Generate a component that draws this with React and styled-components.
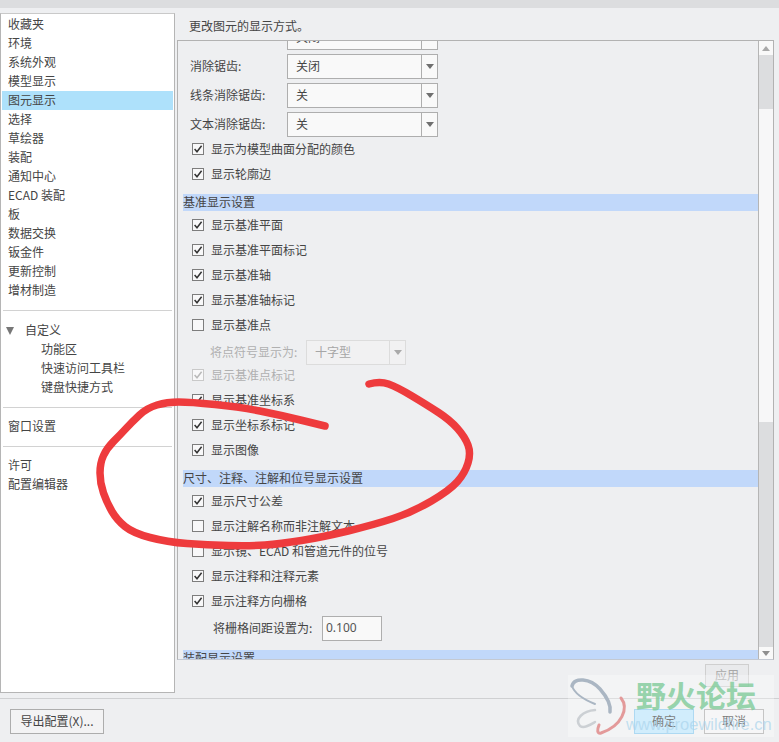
import React from 'react'
import styled, { createGlobalStyle } from 'styled-components'

const Global = createGlobalStyle`
html, body { margin:0; padding:0; background:#eeeff1; }
body { font-family:"Noto Sans CJK SC","Noto Sans",sans-serif; font-size:12px; color:#454545; }
`
const Page = styled.div`
position:relative;
width:779px;
height:742px;
overflow:hidden;
display:flex;
flex-direction:column;
background:#eeeff1;
`
const TopStrip = styled.div`
height:8px;
background:#dcdddf;
`
const Body = styled.div`
height:690px;
box-sizing:border-box;
padding-top:5px;
display:flex;
gap:2px;
`
const Sidebar = styled.div`
width:175px;
height:680px;
box-sizing:border-box;
padding:1px 1px 0;
background:#fff;
border:1px solid #b5b5b5;
border-top-color:#c9c9c9;
`
const NavItem = styled.div`
height:19px;
line-height:18px;
padding-left:${p => p.$indent || 6}px;
background:${p => p.$active ? '#aee1fb' : 'transparent'};
white-space:nowrap;
`
const NavDivider = styled.div`
height:1px;
margin:10px 1px 9px;
background:#d2d2d2;
`
const NavTree = styled.div`
padding-top:1px;
`
const TreeHead = styled.div`
position:relative;
height:19px;
line-height:18px;
padding-left:23px;
`
const TreeArrow = styled.span`
position:absolute;
left:4px;
top:6px;
border-style:solid;
border-width:8px 4.5px 0;
border-color:#777 transparent transparent;
`
const Main = styled.div`
flex:1;
display:flex;
flex-direction:column;
`
const Caption = styled.div`
height:27px;
line-height:26px;
padding-left:12px;
`
const Panel = styled.div`
width:597px;
height:620px;
box-sizing:border-box;
display:flex;
border:1px solid #b2b2b2;
border-bottom-color:#c4c9d2;
`
const Content = styled.div`
flex:1;
min-width:0;
overflow:hidden;
padding-left:5px;
display:flex;
flex-direction:column;
& > * { flex:none; }
`
const SelectStack = styled.div`
display:flex;
flex-direction:column;
gap:4px;
margin:-16px 0 2px;
`
const FieldRow = styled.div`
display:flex;
align-items:center;
height:25px;
padding-left:${p => p.$indent}px;
color:${p => p.$disabled ? '#b0b0b0' : 'inherit'};
margin-bottom:${p => p.$after || 0}px;
`
const FieldLabel = styled.div`
width:${p => p.$width}px;
min-height:1px;
margin-bottom:2px;
white-space:nowrap;
`
const Select = styled.div`
width:${p => p.$width}px;
height:25px;
box-sizing:border-box;
display:flex;
background:${p => p.$disabled ? '#f1f1f2' : '#f9f9f9'};
border:1px solid ${p => p.$disabled ? '#dcdcdc' : '#aeaeae'};
color:${p => p.$disabled ? '#a6a6a6' : '#454545'};
`
const SelectValue = styled.div`
flex:1;
line-height:21px;
padding-left:8px;
`
const SelectButton = styled.div`
width:15px;
display:flex;
align-items:center;
justify-content:center;
border-left:1px solid ${p => p.$disabled ? '#dcdcdc' : '#aeaeae'};
`
const Triangle = styled.span`
border-style:solid;
border-width:${p => p.$up ? '0 4px 5px' : '5px 4px 0'};
border-color:${p => p.$up ? `transparent transparent ${p.$color}` : `${p.$color} transparent transparent`};
`
const CheckRow = styled.div`
display:flex;
align-items:center;
height:20px;
margin-bottom:5px;
padding-left:9px;
color:${p => p.$disabled ? '#b0b0b0' : 'inherit'};
white-space:nowrap;
`
const CheckText = styled.span`
margin-bottom:2px;
`
const Box = styled.span`
width:12px;
height:12px;
box-sizing:border-box;
margin-right:7px;
display:flex;
background:#f8f8f9;
border:1px solid ${p => p.$disabled ? '#c9c9c9' : '#7d7d7d'};
`
const SectionBar = styled.div`
height:17px;
line-height:16px;
margin:5px 0 4px;
background:#c1d8fa;
white-space:nowrap;
`
const NumberField = styled.div`
width:60px;
height:25px;
box-sizing:border-box;
line-height:22px;
padding-left:3px;
background:#f9f9f9;
border:1px solid #aeaeae;
color:#555;
font-family:"Noto Sans",sans-serif;
`
const Scrollbar = styled.div`
width:15px;
box-sizing:border-box;
display:flex;
flex-direction:column;
border-left:1px solid #b5b5b5;
`
const ScrollButton = styled.div`
height:${p => p.$h}px;
display:flex;
align-items:center;
justify-content:center;
background:#f9f9f9;
`
const ScrollTrack = styled.div`
height:${p => p.$h}px;
flex:${p => p.$h ? 'none' : 1};
background:#dcdddf;
`
const ScrollThumb = styled.div`
height:313px;
background:#f7f7f8;
`
const ApplyRow = styled.div`
display:flex;
justify-content:flex-end;
padding:4px 30px 0 0;
`
const Button = styled.div`
width:${p => p.$width}px;
height:${p => p.$height || 25}px;
box-sizing:border-box;
line-height:${p => (p.$height || 25) - 3}px;
text-align:center;
white-space:nowrap;
background:${p => p.$primary ? '#bde5fb' : p.$disabled ? '#e9eaec' : '#f3f3f4'};
border:1px solid ${p => p.$primary ? '#8cc9ec' : p.$disabled ? '#cfcfcf' : '#adadad'};
color:${p => p.$disabled ? '#a8a8a8' : '#454545'};
`
const Footer = styled.div`
flex:1;
display:flex;
gap:10px;
align-items:flex-start;
padding:10px 15px 0 10px;
border-top:1px solid #cfd0d2;
`
const Spacer = styled.div`
flex:1;
`
const Watermark = styled.div`
position:absolute;
left:568px;
top:675px;
width:206px;
height:62px;
background:rgba(255,255,255,0.3);
`
const WatermarkLogo = styled.svg`
position:absolute;
left:0;
top:0;
`
const WatermarkTitle = styled.div`
position:absolute;
left:68px;
top:1px;
font-size:30px;
line-height:36px;
font-weight:700;
white-space:nowrap;
color:rgba(126,203,152,0.8);
`
const WatermarkUrl = styled.div`
position:absolute;
left:58px;
top:37px;
font-family:"Liberation Sans",sans-serif;
font-size:16.5px;
line-height:24px;
white-space:nowrap;
color:rgba(170,212,236,0.7);
`
const Scribble = styled.svg`
position:absolute;
left:0;
top:0;
pointer-events:none;
`

const Check = ({ color }) => (
  <svg width="10" height="10" viewBox="0 0 10 10">
    <polyline points="1.6,5 4,7.8 8.6,1.8" fill="none" stroke={color} strokeWidth="1.5" />
  </svg>
)

const CheckItem = ({ checked, disabled, children }) => (
  <CheckRow $disabled={disabled}>
    <Box $disabled={disabled}>{checked && <Check color={disabled ? '#b9b9b9' : '#333'} />}</Box>
    <CheckText>{children}</CheckText>
  </CheckRow>
)

const Dropdown = ({ width, value, disabled }) => (
  <Select $width={width} $disabled={disabled}>
    <SelectValue>{value}</SelectValue>
    <SelectButton $disabled={disabled}>
      <Triangle $color={disabled ? '#aaa' : '#6f6f6f'} />
    </SelectButton>
  </Select>
)

const navTop = ['收藏夹', '环境', '系统外观', '模型显示', '图元显示', '选择', '草绘器', '装配', '通知中心', 'ECAD 装配', '板', '数据交换', '钣金件', '更新控制', '增材制造']

// hand drawn circle, points traced from the screenshot
const stroke = [[369, 384], [380, 381], [397, 387], [427, 405], [450, 420], [465, 437], [471, 453], [465, 473], [450, 490], [413, 512], [373, 525], [323, 537], [280, 544], [250, 546], [207, 545], [167, 542], [133, 533], [117, 520], [107, 503], [100, 483], [100, 463], [107, 448], [120, 435], [132, 422], [147, 408], [167, 402], [190, 402], [240, 407], [280, 415], [325, 426]]

const smooth = pts => {
  let d = `M${pts[0][0]} ${pts[0][1]}`
  for (let i = 1; i < pts.length - 1; i++) {
    const mx = (pts[i][0] + pts[i + 1][0]) / 2
    const my = (pts[i][1] + pts[i + 1][1]) / 2
    d += ` Q${pts[i][0]} ${pts[i][1]} ${mx} ${my}`
  }
  const last = pts[pts.length - 1]
  return d + ` L${last[0]} ${last[1]}`
}

export default function App() {
  return (
    <Page>
      <Global />
      <TopStrip />
      <Body>
        <Sidebar>
          {navTop.map(n => <NavItem key={n} $active={n === '图元显示'}>{n}</NavItem>)}
          <NavDivider />
          <NavTree>
            <TreeHead><TreeArrow />自定义</TreeHead>
            <NavItem $indent={39}>功能区</NavItem>
            <NavItem $indent={39}>快速访问工具栏</NavItem>
            <NavItem $indent={39}>键盘快捷方式</NavItem>
          </NavTree>
          <NavDivider />
          <NavItem>窗口设置</NavItem>
          <NavDivider />
          <NavItem>许可</NavItem>
          <NavItem>配置编辑器</NavItem>
        </Sidebar>
        <Main>
          <Caption>更改图元的显示方式。</Caption>
          <Panel>
            <Content>
              <SelectStack>
                <FieldRow $indent={7}><FieldLabel $width={97} /><Dropdown width={151} value="关闭" /></FieldRow>
                <FieldRow $indent={7}><FieldLabel $width={97}>消除锯齿:</FieldLabel><Dropdown width={151} value="关闭" /></FieldRow>
                <FieldRow $indent={7}><FieldLabel $width={97}>线条消除锯齿:</FieldLabel><Dropdown width={151} value="关" /></FieldRow>
                <FieldRow $indent={7}><FieldLabel $width={97}>文本消除锯齿:</FieldLabel><Dropdown width={151} value="关" /></FieldRow>
              </SelectStack>
              <CheckItem checked>显示为模型曲面分配的颜色</CheckItem>
              <CheckItem checked>显示轮廓边</CheckItem>
              <SectionBar>基准显示设置</SectionBar>
              <CheckItem checked>显示基准平面</CheckItem>
              <CheckItem checked>显示基准平面标记</CheckItem>
              <CheckItem checked>显示基准轴</CheckItem>
              <CheckItem checked>显示基准轴标记</CheckItem>
              <CheckItem>显示基准点</CheckItem>
              <FieldRow $indent={27} $disabled>
                <FieldLabel $width={96}>将点符号显示为:</FieldLabel>
                <Dropdown width={100} value="十字型" disabled />
              </FieldRow>
              <CheckItem checked disabled>显示基准点标记</CheckItem>
              <CheckItem checked>显示基准坐标系</CheckItem>
              <CheckItem checked>显示坐标系标记</CheckItem>
              <CheckItem checked>显示图像</CheckItem>
              <SectionBar>尺寸、注释、注解和位号显示设置</SectionBar>
              <CheckItem checked>显示尺寸公差</CheckItem>
              <CheckItem>显示注解名称而非注解文本</CheckItem>
              <CheckItem>显示镜、ECAD 和管道元件的位号</CheckItem>
              <CheckItem checked>显示注释和注释元素</CheckItem>
              <CheckItem checked>显示注释方向栅格</CheckItem>
              <FieldRow $indent={30} $after={4}>
                <FieldLabel $width={109}>将栅格间距设置为:</FieldLabel>
                <NumberField>0.100</NumberField>
              </FieldRow>
              <SectionBar>装配显示设置</SectionBar>
            </Content>
            <Scrollbar>
              <ScrollButton $h={14}><Triangle $up $color="#a9a9a9" /></ScrollButton>
              <ScrollTrack $h={54} />
              <ScrollThumb />
              <ScrollTrack />
              <ScrollButton $h={12}><Triangle $color="#8f8f8f" /></ScrollButton>
            </Scrollbar>
          </Panel>
          <ApplyRow>
            <Button $width={44} $height={23} $disabled>应用</Button>
          </ApplyRow>
        </Main>
      </Body>
      <Footer>
        <Button $width={94}>导出配置(X)...</Button>
        <Spacer />
        <Button $width={60} $primary>确定</Button>
        <Button $width={60}>取消</Button>
      </Footer>
      <Watermark>
        <WatermarkLogo width="70" height="62" viewBox="568 675 70 62">
          <path d="M572 686C574 677 590 678 600 689C607 697 611 706 610 712" fill="none" stroke="#aab6c3" strokeWidth="3.5" strokeLinecap="round" />
          <path d="M572 686C575 695 585 700 595 704" fill="none" stroke="#aab6c3" strokeWidth="2" strokeLinecap="round" />
          <path d="M621 698C629 708 622 726 601 733C597 734 597 730 599 725" fill="none" stroke="#e39a9a" strokeWidth="3" strokeLinecap="round" />
          <path d="M595 710C583 711 574 719 580 726C584 729 590 725 595 722" fill="none" stroke="#ccd0d4" strokeWidth="2.5" strokeLinecap="round" />
        </WatermarkLogo>
        <WatermarkTitle>野火论坛</WatermarkTitle>
        <WatermarkUrl>www.proewildfire.cn</WatermarkUrl>
      </Watermark>
      <Scribble width="779" height="742" viewBox="0 0 779 742">
        <path d={smooth(stroke)} fill="none" stroke="#ee3b3d" strokeWidth="7.5" strokeLinecap="round" strokeLinejoin="round" />
      </Scribble>
    </Page>
  )
}
